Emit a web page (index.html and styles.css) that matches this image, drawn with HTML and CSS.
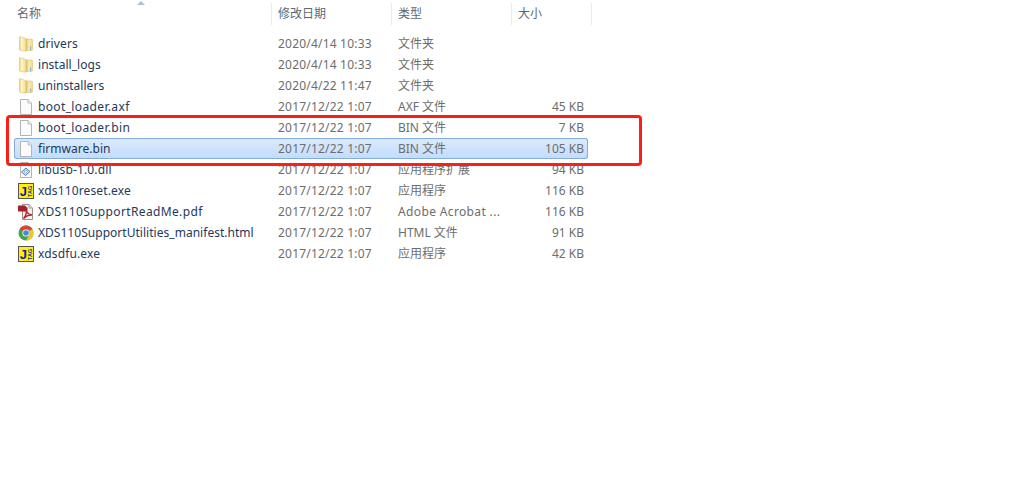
FILE: index.html
```html
<!DOCTYPE html>
<html lang="zh">
<head>
<meta charset="utf-8">
<title>Files</title>
<link rel="stylesheet" href="styles.css">
</head>
<body>
<svg class="defs" width="0" height="0" aria-hidden="true">
  <defs>
    <linearGradient id="fl" x1="0" y1="0" x2="1" y2="0"><stop offset="0" stop-color="#e6cf7e"/><stop offset=".3" stop-color="#fdf4c8"/><stop offset="1" stop-color="#f3df96"/></linearGradient>
    <linearGradient id="fr" x1="0" y1="0" x2="1" y2="0"><stop offset="0" stop-color="#dcbf62"/><stop offset=".45" stop-color="#f9ecb4"/><stop offset="1" stop-color="#efd98c"/></linearGradient>
    <symbol id="folder" viewBox="0 0 16 16">
      <path d="M8 3h5.500a1 1 0 0 1 1 1v9.500a1 1 0 0 1-1 1H8z" fill="url(#fr)" stroke="#dcc477" stroke-width=".6"/>
      <path d="M1.500 1.300q0-.8.8-.6l5.700 2v12.500l-5.700-.9q-.8-.1-.8-.9z" fill="url(#fl)" stroke="#d8bd68" stroke-width=".6"/>
      <path d="M12.700 10.500v3.500" stroke="#5fb6ea" stroke-width="1"/>
    </symbol>
    <symbol id="file" viewBox="0 0 16 16">
      <path d="M2.500 .5h7.600l3.400 3.400v11.600h-11z" fill="#fbfbfb" stroke="#b4b4b4"/>
      <path d="M10 .8v3.200h3.200" fill="#eee" stroke="#bcbcbc"/>
    </symbol>
    <symbol id="dll" viewBox="0 0 16 16">
      <path d="M2.500 .5h7.600l3.400 3.400v11.600h-11z" fill="#fbfbfb" stroke="#b4b4b4"/>
      <path d="M10 .8v3.200h3.200" fill="#eee" stroke="#bcbcbc"/>
      <path d="M3.500 10l4.500-4 4 3.500-4.500 4z" fill="#cfe0f4" stroke="#4f7fb8"/>
      <path d="M6 9.800l2-1.700 1.500 1.400-2 1.700z" fill="#fff" stroke="#6b93c4" stroke-width=".7"/>
    </symbol>
    <symbol id="jtag" viewBox="0 0 16 16">
      <rect x=".5" y=".5" width="15" height="15" fill="#fff200" stroke="#555"/>
      <text class="j" x="1.800" y="12.500">J</text>
      <text class="tag" transform="translate(13.800 14) rotate(-90)">TAG</text>
    </symbol>
    <symbol id="pdf" viewBox="0 0 16 16">
      <path d="M4.500 .5h6.600l3.400 3.400v11.600h-10z" fill="#f6f2f2" stroke="#a08a8a"/>
      <path d="M11 .8v3.200h3.200" fill="#e8e0e0" stroke="#a89898"/>
      <path d="M0 1.500h7l2.500 2.500v3.500H0z" fill="#a3222a"/>
      <path d="M5.500 14.500c2.500-3 3.500-6 2.500-9 .5 3 2.500 5 6 5.500-3.500-.3-6 1-8.500 3.500z" fill="none" stroke="#b5252d" stroke-width="1.400"/>
    </symbol>
    <symbol id="chrome" viewBox="0 0 16 16">
      <circle cx="8" cy="8" r="7.500" fill="#3fa649"/>
      <path d="M8 .5a7.500 7.500 0 0 1 6.500 3.750H8A3.750 3.750 0 0 0 4.750 6.100L1.500 4.250A7.500 7.500 0 0 1 8 .5z" fill="#d9453a"/>
      <path d="M14.500 4.250A7.500 7.500 0 0 1 8 15.500l3.250-5.600A3.750 3.750 0 0 0 11.250 6.100z" fill="#f5c42c"/>
      <circle cx="8" cy="8" r="3.600" fill="#fff"/>
      <circle cx="8" cy="8" r="2.800" fill="#4a86e0"/>
    </symbol>
  </defs>
</svg>

<div class="head">
  <div class="hcell hname">名称</div>
  <div class="hcell hcol">修改日期</div>
  <div class="hcell hcol">类型</div>
  <div class="hcell hsize">大小</div>
</div>
<span class="sort"></span>

<div class="list">
  <div class="row"><span class="name"><svg class="ico"><use href="#folder"/></svg><span class="mid">drivers</span></span><span class="date">2020/4/14 10:33</span><span class="type">文件夹</span><span class="size"></span></div>
  <div class="row"><span class="name"><svg class="ico"><use href="#folder"/></svg>install_logs</span><span class="date">2020/4/14 10:33</span><span class="type">文件夹</span><span class="size"></span></div>
  <div class="row"><span class="name"><svg class="ico"><use href="#folder"/></svg>uninstallers</span><span class="date">2020/4/22 11:47</span><span class="type">文件夹</span><span class="size"></span></div>
  <div class="row"><span class="name"><svg class="ico"><use href="#file"/></svg><span class="wide">boot_loader.axf</span></span><span class="date">2017/12/22 1:07</span><span class="type">AXF 文件</span><span class="size">45 KB</span></div>
  <div class="row"><span class="name"><svg class="ico"><use href="#file"/></svg><span class="wide">boot_loader.bin</span></span><span class="date">2017/12/22 1:07</span><span class="type">BIN 文件</span><span class="size">7 KB</span></div>
  <div class="row selected"><span class="name"><svg class="ico"><use href="#file"/></svg>firmware.bin</span><span class="date">2017/12/22 1:07</span><span class="type">BIN 文件</span><span class="size">105 KB</span></div>
  <div class="row"><span class="name"><svg class="ico"><use href="#dll"/></svg><span class="mid">libusb-1.0.dll</span></span><span class="date">2017/12/22 1:07</span><span class="type">应用程序扩展</span><span class="size">94 KB</span></div>
  <div class="row"><span class="name"><svg class="ico"><use href="#jtag"/></svg><span class="mid">xds110reset.exe</span></span><span class="date">2017/12/22 1:07</span><span class="type">应用程序</span><span class="size">116 KB</span></div>
  <div class="row"><span class="name"><svg class="ico"><use href="#pdf"/></svg><span class="wide">XDS110SupportReadMe.pdf</span></span><span class="date">2017/12/22 1:07</span><span class="type">Adobe Acrobat ...</span><span class="size">116 KB</span></div>
  <div class="row"><span class="name"><svg class="ico"><use href="#chrome"/></svg>XDS110SupportUtilities_manifest.html</span><span class="date">2017/12/22 1:07</span><span class="type">HTML 文件</span><span class="size">91 KB</span></div>
  <div class="row"><span class="name"><svg class="ico"><use href="#jtag"/></svg><span class="mid">xdsdfu.exe</span></span><span class="date">2017/12/22 1:07</span><span class="type">应用程序</span><span class="size">42 KB</span></div>
</div>

<div class="mark"></div>
</body>
</html>
```
FILE: styles.css
```css
* { box-sizing: border-box; }
html, body { margin: 0; padding: 0; }
body {
  width: 1031px;
  height: 500px;
  background: #fff;
  overflow: hidden;
  position: relative;
  font: 12px/21px "Noto Sans", "Noto Sans CJK SC", sans-serif;
}
.defs { position: absolute; }
.head {
  display: flex;
  height: 33px;
  padding-top: 3px;
  color: #5a6779;
}
.hcell {
  height: 22px;
  line-height: 21px;
  padding-left: 6px;
  border-right: 1px solid #e8ecf2;
}
.hname { width: 272px; padding-left: 17px; }
.hcol { width: 120px; }
.hsize { width: 80px; }
.sort {
  position: absolute;
  left: 137px;
  top: 1px;
  width: 0;
  height: 0;
  border-left: 4px solid transparent;
  border-right: 4px solid transparent;
  border-bottom: 4px solid #a9c0d6;
}
.list { margin-left: 14px; width: 574px; }
.row {
  display: grid;
  grid-template-columns: 258px 120px 120px 76px;
  height: 21px;
  line-height: 21px;
  white-space: nowrap;
  color: #6d6d6d;
}
.name {
  display: flex;
  align-items: center;
  gap: 4px;
  padding-left: 4px;
  color: #1e395b;
  letter-spacing: .03px;
}
.wide { letter-spacing: .36px; }
.mid { letter-spacing: .14px; }
.ico { width: 16px; height: 16px; flex: none; }
.j { font: 700 13px "Liberation Sans", sans-serif; fill: #1a1aa8; }
.tag { font: 700 5.500px "Liberation Sans", sans-serif; fill: #1a1aa8; }
.date { padding-left: 6px; letter-spacing: .2px; }
.type { padding-left: 6px; }
.size { text-align: right; padding-right: 4px; }
.selected {
  box-shadow: inset 0 0 0 1px #84acdd;
  border-radius: 3px;
  background: linear-gradient(#dcebfc, #c1dcfc);
}
.row:nth-child(9) .type { letter-spacing: .36px; }
.mark {
  position: absolute;
  left: 6px;
  top: 115px;
  width: 636px;
  height: 51px;
  border: 3px solid #fb1f17;
  border-radius: 4px;
}
```
